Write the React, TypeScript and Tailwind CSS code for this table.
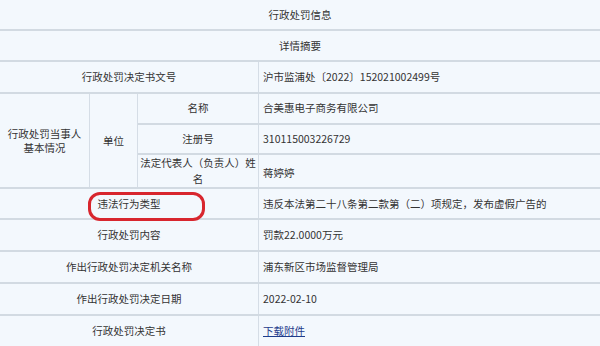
import React from 'react';

const font = { fontFamily: '"Microsoft YaHei", "Noto Sans CJK SC", "Noto Sans", sans-serif' };

type RowProps = { label: string; h: string; children: React.ReactNode; last?: boolean };

const Row = ({ label, h, children, last }: RowProps) => (
  <div className={`flex ${h} ${last ? '' : 'border-b-2 border-[#d2dae2]'}`}>
    <div className="w-[259px] shrink-0 flex items-center justify-center border-r border-[#d5dde6]">{label}</div>
    <div className="flex-1 flex items-center pl-[4px]">{children}</div>
  </div>
);

export default function App() {
  const sub = [
    { label: '名称', value: '合美惠电子商务有限公司', h: 'h-[32px]' },
    { label: '注册号', value: '310115003226729', h: 'h-[31px]' },
  ];

  return (
    <div className="w-[600px] h-[346px] overflow-hidden bg-[#f3f8fd] text-[#333] text-[10.5px] leading-[14px] relative" style={font}>
      <div className="h-[31px] flex items-center justify-center border-b-2 border-[#d2dae2]">行政处罚信息</div>
      <div className="h-[31px] flex items-center justify-center border-b-2 border-[#d2dae2]">详情摘要</div>
      <Row label="行政处罚决定书文号" h="h-[32px]">沪市监浦处〔2022〕152021002499号</Row>

      {/* party section: two spanning columns beside three sub-rows */}
      <div className="flex h-[95px] border-b-2 border-[#d2dae2]">
        <div className="w-[90px] shrink-0 flex items-center justify-center text-center border-r border-[#d5dde6]">
          行政处罚当事人<br />基本情况
        </div>
        <div className="w-[48px] shrink-0 flex items-center justify-center border-r border-[#d5dde6]">单位</div>
        <div className="flex-1 flex flex-col">
          {sub.map((s) => (
            <div key={s.label} className={`flex ${s.h} border-b-2 border-[#d2dae2]`}>
              <div className="w-[121px] shrink-0 flex items-center justify-center border-r border-[#d5dde6]">{s.label}</div>
              <div className="flex-1 flex items-center pl-[4px]">{s.value}</div>
            </div>
          ))}
          <div className="flex flex-1">
            <div className="w-[121px] shrink-0 flex items-center justify-center text-center leading-[16px] border-r border-[#d5dde6]">
              法定代表人（负责人）姓<br />名
            </div>
            <div className="flex-1 flex items-center pl-[4px] pt-[3px]">蒋婷婷</div>
          </div>
        </div>
      </div>

      <Row label="违法行为类型" h="h-[31px]">违反本法第二十八条第二款第（二）项规定，发布虚假广告的</Row>
      <Row label="行政处罚内容" h="h-[32px]">罚款22.0000万元</Row>
      <Row label="作出行政处罚决定机关名称" h="h-[32px]">浦东新区市场监督管理局</Row>
      <Row label="作出行政处罚决定日期" h="h-[32px]">2022-02-10</Row>
      <Row label="行政处罚决定书" h="h-[30px]" last>
        <span className="text-[#1f3c8c] underline">下载附件</span>
      </Row>

      {/* red highlight ring */}
      <div className="absolute left-[88px] top-[192px] w-[117px] h-[29px] border-[3px] border-[#d8262e] rounded-[12px]" />
    </div>
  );
}
